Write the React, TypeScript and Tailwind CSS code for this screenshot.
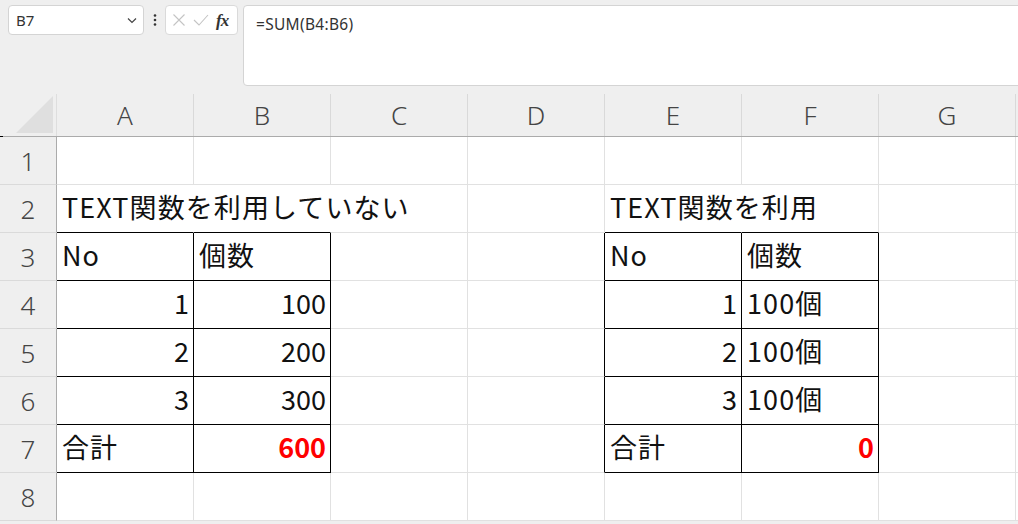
import React from "react";

type B = "g" | "k" | "n";

const rB: Record<B, string> = {
  g: "border-r border-r-[#e1e1e1]",
  k: "border-r border-r-black",
  n: "border-r border-r-transparent",
};
const bB: Record<B, string> = {
  g: "border-b border-b-[#e1e1e1]",
  k: "border-b border-b-black",
  n: "border-b border-b-transparent",
};

type CellDef = { t?: string; right?: boolean; red?: boolean; r?: B; b?: B };

const cols = ["A", "B", "C", "D", "E", "F", "G", ""];

function row(defs: Record<string, CellDef>): CellDef[] {
  return ["A", "B", "C", "D", "E", "F", "G", "H"].map((c) => defs[c] || {});
}

const rows: CellDef[][] = [
  row({}),
  row({
    A: { t: "TEXT関数を利用していない", r: "n", b: "k" },
    B: { r: "n", b: "k" },
    E: { t: "TEXT関数を利用", r: "n", b: "k" },
    F: { b: "k" },
  }),
  row({
    A: { t: "No", r: "k", b: "k" },
    B: { t: "個数", r: "k", b: "k" },
    D: { r: "k" },
    E: { t: "No", r: "k", b: "k" },
    F: { t: "個数", r: "k", b: "k" },
  }),
  row({
    A: { t: "1", right: true, r: "k", b: "k" },
    B: { t: "100", right: true, r: "k", b: "k" },
    D: { r: "k" },
    E: { t: "1", right: true, r: "k", b: "k" },
    F: { t: "100個", r: "k", b: "k" },
  }),
  row({
    A: { t: "2", right: true, r: "k", b: "k" },
    B: { t: "200", right: true, r: "k", b: "k" },
    D: { r: "k" },
    E: { t: "2", right: true, r: "k", b: "k" },
    F: { t: "100個", r: "k", b: "k" },
  }),
  row({
    A: { t: "3", right: true, r: "k", b: "k" },
    B: { t: "300", right: true, r: "k", b: "k" },
    D: { r: "k" },
    E: { t: "3", right: true, r: "k", b: "k" },
    F: { t: "100個", r: "k", b: "k" },
  }),
  row({
    A: { t: "合計", r: "k", b: "k" },
    B: { t: "600", right: true, red: true, r: "k", b: "k" },
    D: { r: "k" },
    E: { t: "合計", r: "k", b: "k" },
    F: { t: "0", right: true, red: true, r: "k", b: "k" },
  }),
  row({}),
];

const cjk = "font-['Noto_Sans_CJK_JP','Noto_Sans',sans-serif]";

function Cell({ d }: { d: CellDef }) {
  const cls = [
    "h-[48px] flex items-center pb-[4px] whitespace-nowrap overflow-visible text-[27px] leading-none",
    rB[d.r || "g"],
    bB[d.b || "g"],
    d.right ? "justify-end pr-[4px]" : "justify-start pl-[5px]",
    d.red ? "text-[#ff0000] font-bold" : "text-[#111]",
  ].join(" ");
  return (
    <div className={cls}>
      <span className={d.right ? "" : "tracking-[1.1px]"}>{d.t}</span>
    </div>
  );
}

export default function App() {
  return (
    <div className={`relative w-[1018px] h-[524px] overflow-hidden bg-[#efefef] ${cjk}`}>
      {/* formula bar */}
      <div className="flex items-start pl-[8px] pt-[5px] h-[86px]">
        <div className="shrink-0 w-[136px] h-[30px] bg-white border border-[#d4d4d4] rounded-[4px] flex items-center justify-between pl-[7px] pr-[5px]">
          <span className="text-[15px] text-[#333] font-['Noto_Sans',sans-serif]">B7</span>
          <svg width="12" height="12" viewBox="0 0 12 12" className="text-[#444]">
            <path d="M2 4.5 L6 8.5 L10 4.5" fill="none" stroke="currentColor" strokeWidth="1.2" />
          </svg>
        </div>
        <div className="shrink-0 w-[21px] h-[30px] flex items-center justify-center">
          <svg width="4" height="14" viewBox="0 0 4 14">
            <circle cx="2" cy="2.5" r="1.3" fill="#333" />
            <circle cx="2" cy="7" r="1.3" fill="#333" />
            <circle cx="2" cy="11.5" r="1.3" fill="#333" />
          </svg>
        </div>
        <div className="shrink-0 w-[73px] h-[30px] bg-white border border-[#dadada] rounded-[4px] flex items-center pl-[6px] gap-[7px]">
          <svg width="14" height="14" viewBox="0 0 14 14">
            <path d="M1.5 1.5 L12.5 12.5 M12.5 1.5 L1.5 12.5" stroke="#c4c4c4" strokeWidth="1.1" fill="none" />
          </svg>
          <svg width="16" height="14" viewBox="0 0 16 14">
            <path d="M1 7 L6 12 L15 2" stroke="#c4c4c4" strokeWidth="1.1" fill="none" />
          </svg>
          <span className="font-['Liberation_Serif',serif] italic font-bold text-[17px] text-[#333] leading-none tracking-[-1px]">fx</span>
        </div>
        <div className="shrink-0 ml-[5px] w-[800px] h-[81px] bg-white border border-[#d4d4d4] rounded-l-[4px] pl-[12px] pt-[5px]">
          <span className="text-[15.5px] text-[#333] font-['Noto_Sans',sans-serif] tracking-[0.3px]">=SUM(B4:B6)</span>
        </div>
      </div>

      {/* grid */}
      <div className="grid grid-cols-[57px_repeat(8,137px)] bg-white">
        {/* header row */}
        <div className="h-[51px] bg-[#efefef] border-b border-b-[#ababab] flex items-end">
          <div className="w-[57px] h-[42px] border-r border-r-[#dedede] flex items-end justify-end pr-[3px] pb-[3px]">
            <svg width="37" height="37" viewBox="0 0 37 37">
              <path d="M37 0 L37 37 L0 37 Z" fill="#dfdfdf" />
            </svg>
          </div>
        </div>
        {cols.map((c, k) => (
          <div key={k} className="h-[51px] bg-[#efefef] border-b border-b-[#ababab] flex items-end">
            <div className="w-full h-[42px] border-r border-r-[#d9d9d9] flex items-center justify-center text-[26px] text-[#444] font-['Noto_Sans',sans-serif] font-light leading-none">
              {c}
            </div>
          </div>
        ))}
        {rows.map((r, i) => (
          <React.Fragment key={i}>
            <div className="h-[48px] bg-[#efefef] border-r border-r-[#ababab] border-b border-b-[#dadada] flex items-center justify-center text-[26px] text-[#444] font-['Noto_Sans',sans-serif] font-light leading-none">
              {i + 1}
            </div>
            {r.map((d, j) => (
              <Cell key={j} d={d} />
            ))}
          </React.Fragment>
        ))}
      </div>
      <div className="absolute left-0 top-[136px] w-[3px] h-[1px] bg-black" />
    </div>
  );
}
